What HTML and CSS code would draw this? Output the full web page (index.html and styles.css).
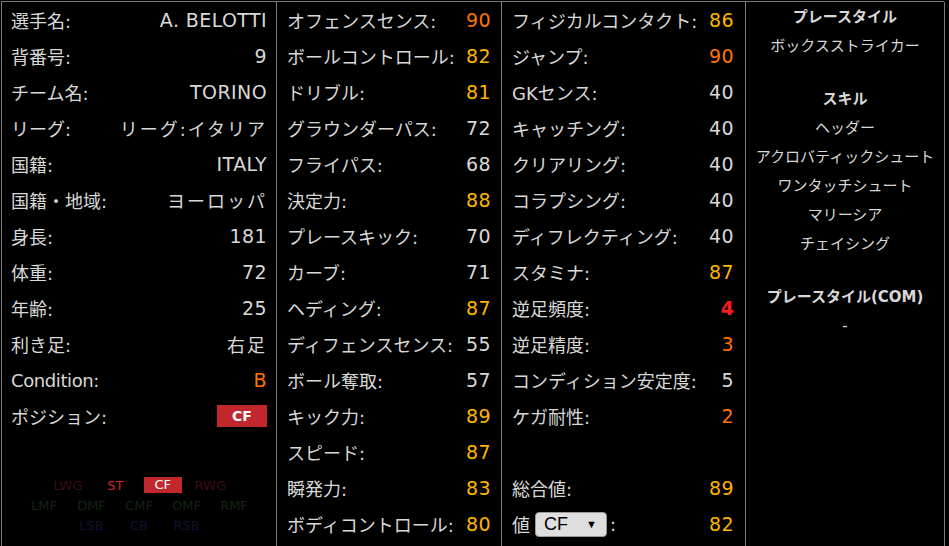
FILE: index.html
```html
<!DOCTYPE html>
<html lang="ja">
<head>
<meta charset="utf-8">
<title>Player</title>
<link rel="stylesheet" href="styles.css">
</head>
<body>
<div class="sheet">
  <div class="col c1">
    <div class="row"><span>選手名:</span><span>A. BELOTTI</span></div>
    <div class="row"><span>背番号:</span><span>9</span></div>
    <div class="row"><span>チーム名:</span><span>TORINO</span></div>
    <div class="row"><span>リーグ:</span><span class="jp">リーグ:イタリア</span></div>
    <div class="row"><span>国籍:</span><span>ITALY</span></div>
    <div class="row"><span>国籍・地域:</span><span class="jp">ヨーロッパ</span></div>
    <div class="row"><span>身長:</span><span>181</span></div>
    <div class="row"><span>体重:</span><span>72</span></div>
    <div class="row"><span>年齢:</span><span>25</span></div>
    <div class="row"><span>利き足:</span><span class="jp">右足</span></div>
    <div class="row"><span class="cond">Condition:</span><span class="orange">B</span></div>
    <div class="row"><span>ポジション:</span><span class="badge">CF</span></div>
    <div class="posmap">
      <div class="prow">
        <span class="pos fw">LWG</span><span class="pos st">ST</span><span class="pos"><span class="cur">CF</span></span><span class="pos fw">RWG</span>
      </div>
      <div class="prow">
        <span class="pos mf">LMF</span><span class="pos mf">DMF</span><span class="pos mf">CMF</span><span class="pos mf">OMF</span><span class="pos mf">RMF</span>
      </div>
      <div class="prow">
        <span class="pos df">LSB</span><span class="pos df">CB</span><span class="pos df">RSB</span>
      </div>
    </div>
  </div>
  <div class="col c2">
    <div class="row"><span>オフェンスセンス:</span><span class="orange">90</span></div>
    <div class="row"><span>ボールコントロール:</span><span class="gold">82</span></div>
    <div class="row"><span>ドリブル:</span><span class="gold">81</span></div>
    <div class="row"><span>グラウンダーパス:</span><span>72</span></div>
    <div class="row"><span>フライパス:</span><span>68</span></div>
    <div class="row"><span>決定力:</span><span class="gold">88</span></div>
    <div class="row"><span>プレースキック:</span><span>70</span></div>
    <div class="row"><span>カーブ:</span><span>71</span></div>
    <div class="row"><span>ヘディング:</span><span class="gold">87</span></div>
    <div class="row"><span>ディフェンスセンス:</span><span>55</span></div>
    <div class="row"><span>ボール奪取:</span><span>57</span></div>
    <div class="row"><span>キック力:</span><span class="gold">89</span></div>
    <div class="row"><span>スピード:</span><span class="gold">87</span></div>
    <div class="row"><span>瞬発力:</span><span class="gold">83</span></div>
    <div class="row"><span>ボディコントロール:</span><span class="gold">80</span></div>
  </div>
  <div class="col c3">
    <div class="row"><span>フィジカルコンタクト:</span><span class="gold">86</span></div>
    <div class="row"><span>ジャンプ:</span><span class="orange">90</span></div>
    <div class="row"><span>GKセンス:</span><span>40</span></div>
    <div class="row"><span>キャッチング:</span><span>40</span></div>
    <div class="row"><span>クリアリング:</span><span>40</span></div>
    <div class="row"><span>コラプシング:</span><span>40</span></div>
    <div class="row"><span>ディフレクティング:</span><span>40</span></div>
    <div class="row"><span>スタミナ:</span><span class="gold">87</span></div>
    <div class="row"><span>逆足頻度:</span><span class="red">4</span></div>
    <div class="row"><span>逆足精度:</span><span class="orange">3</span></div>
    <div class="row"><span>コンディション安定度:</span><span>5</span></div>
    <div class="row"><span>ケガ耐性:</span><span class="orange">2</span></div>
    <div class="row"></div>
    <div class="row"><span>総合値:</span><span class="gold">89</span></div>
    <div class="row"><span class="sel-label">値<span class="select"><span>CF</span><span class="arrow">▼</span></span>:</span><span class="gold">82</span></div>
  </div>
  <div class="col c4">
    <div class="head">プレースタイル</div>
    <div class="item">ボックスストライカー</div>
    <div class="head gap">スキル</div>
    <div class="item">ヘッダー</div>
    <div class="item">アクロバティックシュート</div>
    <div class="item">ワンタッチシュート</div>
    <div class="item">マリーシア</div>
    <div class="item">チェイシング</div>
    <div class="head gap">プレースタイル(COM)</div>
    <div class="item">-</div>
  </div>
</div>
</body>
</html>
```
FILE: styles.css
```css
html, body {
  margin: 0;
  padding: 0;
  background: #000;
}
body {
  color: #d8d8d8;
  font-family: "DejaVu Sans", "Noto Sans CJK JP", sans-serif;
  font-size: 18px;
  overflow: hidden;
}
.sheet {
  display: flex;
  margin: 1px 0 0 1px;
  height: 545px;
  border-top: 1px solid #7a7a7a;
  border-left: 1px solid #7a7a7a;
  width: 943px;
  box-sizing: border-box;
}
.col {
  border-right: 1px solid #7a7a7a;
  flex: none;
}
.c1 { width: 274px; }
.c2 { width: 224px; }
.c3 { width: 243px; }
.c4 { width: 198px; }
.row {
  display: flex;
  justify-content: space-between;
  align-items: center;
  height: 36px;
  padding: 0 10px;
  white-space: nowrap;
}
.row > span + span {
  font-size: 19px;
  letter-spacing: 0.4px;
}
.row > span.jp {
  font-size: 18px;
  letter-spacing: 2px;
}
.cond {
  letter-spacing: -0.4px;
}
.c1 .row { padding: 0 9px 0 9px; }
.c2 .row { padding: 0 10px 0 10px; }
.c3 .row { padding: 0 11px 0 10px; }
.orange { color: #ff7300; }
.gold { color: #ffb400; }
.row > .red { color: #ff1a1a; font-weight: bold; letter-spacing: 0; }
.row > .badge {
  background: #c1272d;
  color: #fff;
  font-weight: bold;
  font-size: 14px;
  letter-spacing: 0;
  width: 50px;
  height: 22px;
  line-height: 22px;
  text-align: center;
}
.posmap {
  margin-top: 41px;
  font-size: 13px;
}
.prow {
  display: flex;
  justify-content: center;
  height: 20px;
  align-items: center;
}
.pos {
  width: 47.5px;
  text-align: center;
}
.fw { color: #3c0c0e; }
.st { color: #d0262c; }
.mf { color: #122412; }
.df { color: #0f1432; }
.cur {
  display: inline-block;
  background: #c1272d;
  color: #fff;
  width: 38px;
  height: 16px;
  line-height: 16px;
}
.sel-label {
  display: flex;
  align-items: center;
}
.select {
  display: inline-flex;
  justify-content: space-between;
  align-items: center;
  margin: 0 3px 0 5px;
  width: 72px;
  height: 25px;
  box-sizing: border-box;
  padding: 0 9px 0 8px;
  background: #dedede;
  border: 1px solid #999;
  border-radius: 4px;
  color: #000;
  font-family: "Liberation Sans", sans-serif;
  font-size: 18px;
}
.arrow {
  font-size: 11px;
}
.c4 {
  text-align: center;
  font-size: 15px;
  line-height: 29px;
  padding-top: 1px;
}
.head {
  font-weight: bold;
}
.gap {
  margin-top: 24px;
}
```
